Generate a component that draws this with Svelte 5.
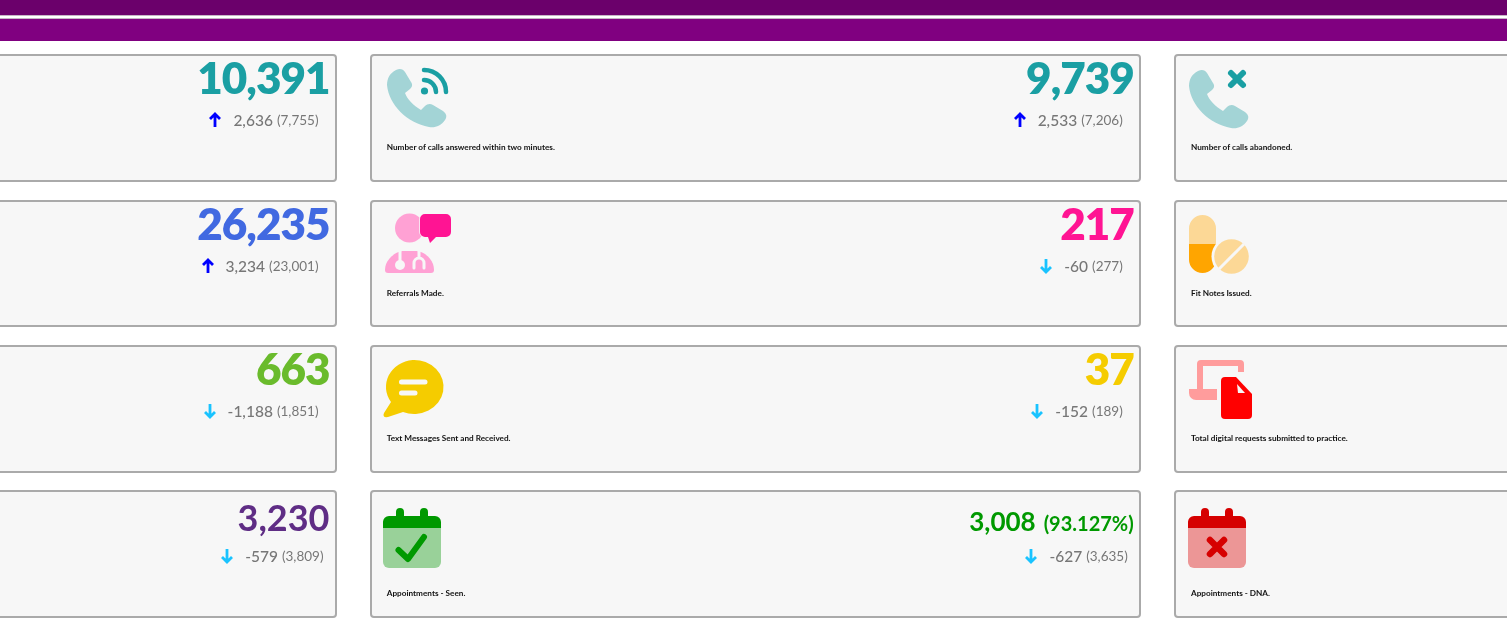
<script>
  const cards = [
    { tone: 'teal', value: '10,391', dir: 'up', delta: '2,636', prev: '(7,755)', caption: '', icon: '' },
    { tone: 'teal', value: '9,739', dir: 'up', delta: '2,533', prev: '(7,206)', caption: 'Number of calls answered within two minutes.', icon: 'phone-wifi' },
    { tone: 'teal', value: '', dir: '', delta: '', prev: '', caption: 'Number of calls abandoned.', icon: 'phone-x' },
    { tone: 'blue', value: '26,235', dir: 'up', delta: '3,234', prev: '(23,001)', caption: '', icon: '' },
    { tone: 'pink', value: '217', dir: 'down', delta: '-60', prev: '(277)', caption: 'Referrals Made.', icon: 'doctor' },
    { tone: 'orange', value: '', dir: '', delta: '', prev: '', caption: 'Fit Notes Issued.', icon: 'pills' },
    { tone: 'lime', value: '663', dir: 'down', delta: '-1,188', prev: '(1,851)', caption: '', icon: '' },
    { tone: 'yellow', value: '37', dir: 'down', delta: '-152', prev: '(189)', caption: 'Text Messages Sent and Received.', icon: 'chat' },
    { tone: 'red', value: '', dir: '', delta: '', prev: '', caption: 'Total digital requests submitted to practice.', icon: 'digital' },
    { tone: 'purple', value: '3,230', dir: 'down', delta: '-579', prev: '(3,809)', caption: '', icon: '', low: true },
    { tone: 'green', value: '3,008', pct: '(93.127%)', dir: 'down', delta: '-627', prev: '(3,635)', caption: 'Appointments - Seen.', icon: 'cal-check', low: true },
    { tone: 'crimson', value: '', dir: '', delta: '', prev: '', caption: 'Appointments - DNA.', icon: 'cal-x', low: true }
  ];
  const phone = 'M9 2C13 0 16 1 18 4L24 14C26 17 25 19 23 21L18 25C20 31 27 38 34 42L38 38C40 36 43 35 46 37L56 43C60 46 60 49 58 52C54 58 48 60 42 59C20 55 2 37 0 17C0 10 3 5 9 2Z';
  const bubble = 'M43 2H64A5 5 0 0 1 69 7V20A5 5 0 0 1 64 25H54L48 31L46 25H43A5 5 0 0 1 38 20V7A5 5 0 0 1 43 2Z';
</script>

<div class="page">
  <div class="band-dark"></div>
  <div class="band-main"></div>
  <div class="grid">
    {#each cards as c}
      <section class="card {c.tone}" class:low={c.low}>
        <div class="left">
          <div class="icon">
            {#if c.icon === 'phone-wifi'}
              <svg viewBox="0 0 70 70" width="70" height="70">
                <path class="soft" transform="translate(5 2)" d={phone} />
                <circle class="solid" cx="42.5" cy="25" r="3.6" />
                <path class="line" d="M42 14a12 12 0 0 1 12 12M42 4a22 22 0 0 1 22 22" />
              </svg>
            {:else if c.icon === 'phone-x'}
              <svg viewBox="0 0 70 70" width="70" height="70">
                <path class="soft" transform="translate(3 3)" d={phone} />
                <path class="line thick" d="M45 7L57 19M57 7L45 19" />
              </svg>
            {:else if c.icon === 'doctor'}
              <svg viewBox="0 0 70 70" width="70" height="70">
                <circle class="soft" cx="27.500" cy="16" r="14.500" />
                <path class="solid halo-stroke" d={bubble} />
                <path class="soft" d="M3 58C3 47 14 39 22 39H33C42 39 52 47 52 58Q52 61 49 61H6Q3 61 3 58Z" />
                <path class="cut" d="M18 39V48M37 39V46M32 56V51A5 5 0 0 1 42 51V56" />
                <circle class="dot" cx="18" cy="53" r="5" />
              </svg>
            {:else if c.icon === 'pills'}
              <svg viewBox="0 0 70 70" width="70" height="70">
                <path class="soft" d="M3 32V16.500A13.500 13.500 0 0 1 30 16.500V32Z" />
                <path class="solid" d="M3 32H30V47.500A13.500 13.500 0 0 1 3 47.500Z" />
                <circle class="dot" cx="45.500" cy="44.500" r="20" />
                <circle class="soft" cx="45.500" cy="44.500" r="17.300" />
                <path class="cut wide" d="M33 57L58 32" />
              </svg>
            {:else if c.icon === 'chat'}
              <svg viewBox="0 0 70 70" width="70" height="70">
                <path class="solid" d="M30.700 3A29.500 27 0 1 1 21 55L6 60Q0 61 2 56L9 45A29.500 27 0 0 1 30.700 3Z" />
                <path class="cut thick" d="M19.500 25H43M19.500 36H33" />
              </svg>
            {:else if c.icon === 'digital'}
              <svg viewBox="0 0 70 70" width="70" height="70">
                <path class="soft" d="M11 32V7A4 4 0 0 1 15 3H54A4 4 0 0 1 58 7V15H52V9H17V32H31V43H10A7 7 0 0 1 3 36V32Z" />
                <path class="solid" d="M39 20H50L66 37V58A4 4 0 0 1 62 62H39A4 4 0 0 1 35 58V24A4 4 0 0 1 39 20Z" />
                <path class="dot" d="M51 27L59 36H52Z" />
              </svg>
            {:else if c.icon === 'cal-check' || c.icon === 'cal-x'}
              <svg viewBox="0 0 70 70" width="70" height="70">
                <path class="soft" d="M1 26H59V60A6 6 0 0 1 53 66H7A6 6 0 0 1 1 60Z" />
                <path class="solid" d="M1 26V20A6 6 0 0 1 7 14H14V10A4 4 0 0 1 22 10V14H38V10A4 4 0 0 1 46 10V14H53A6 6 0 0 1 59 20V26Z" />
                {#if c.icon === 'cal-check'}
                  <path class="line big" d="M16.500 48L26 57L42 35" />
                {:else}
                  <path class="line big" d="M23 38L37 52M37 38L23 52" />
                {/if}
              </svg>
            {/if}
          </div>
          {#if c.caption}<p class="caption">{c.caption}</p>{/if}
        </div>
        <div class="right">
          {#if c.value}
            <div class="value" class:small={c.pct}>{c.value}{#if c.pct}<span class="pct">{c.pct}</span>{/if}</div>
            <div class="delta">
              <svg class="arrow {c.dir}" viewBox="0 0 14 16" width="14" height="16">
                {#if c.dir === 'up'}
                  <path d="M7 15V2M2 7L7 2L12 7" />
                {:else}
                  <path d="M7 1V14M2 9L7 14L12 9" />
                {/if}
              </svg>
              <span class="num">{c.delta}</span>
              <span class="prev">{c.prev}</span>
            </div>
          {/if}
        </div>
      </section>
    {/each}
  </div>
</div>

<style>
  :global(body) { margin: 0; background: #fff; }
  .page {
    width: 1507px;
    height: 628px;
    overflow: hidden;
    font-family: Lato, "Open Sans", sans-serif;
    filter: blur(0.45px);
  }
  .band-dark { height: 15px; background: #6b006b; border-bottom: 1px solid #c4b4c4; }
  .band-main { height: 22px; margin-top: 2px; border-top: 1px solid #c4b4c4; background: #800080; }
  .grid {
    display: grid;
    grid-template-columns: repeat(3, 771px);
    grid-auto-rows: 127.67px;
    column-gap: 33.25px;
    row-gap: 17.67px;
    margin: 13.4px 0 0 -434.5px;
  }
  .card {
    box-sizing: border-box;
    display: flex;
    justify-content: space-between;
    background: #f7f7f7;
    border: 2px solid #aaaaaa;
    border-radius: 4px;
    --c: #1a9fa3;
    --s: #a3d4d6;
  }
  .blue { --c: #4169e1; }
  .pink { --c: #ff1493; --s: #ffa1d4; }
  .orange { --c: #ffa500; --s: #fcd896; }
  .lime { --c: #6abb2c; }
  .yellow { --c: #f5cc00; }
  .red { --c: #ff0000; --s: #ff9c9c; }
  .purple { --c: #5f2d85; }
  .green { --c: #009900; --s: #99d199; }
  .crimson { --c: #d60000; --s: #ec9696; }

  .left { padding: 10px 0 0 10px; }
  .icon { height: 70px; }
  .icon svg { display: block; overflow: visible; }
  .crimson .icon svg { margin-left: 1px; }
  .soft { fill: var(--s); }
  .solid { fill: var(--c); }
  .halo-stroke { stroke: #f7f7f7; stroke-width: 1.500px; paint-order: stroke; }
  .dot { fill: #f7f7f7; }
  .line { fill: none; stroke: var(--c); stroke-width: 4.500px; stroke-linecap: round; stroke-linejoin: round; }
  .line.thick { stroke-width: 6px; }
  .line.big { stroke-width: 6px; }
  .crimson .line.big { stroke-width: 6.500px; }
  .cut { fill: none; stroke: #f7f7f7; stroke-width: 3px; stroke-linecap: round; }
  .cut.wide { stroke-linecap: butt; }
  .cut.thick { stroke-width: 5px; }
  .caption {
    margin: 6px 0 0 5px;
    font-size: 8.200px;
    line-height: 10px;
    font-weight: 700;
    color: #111;
    white-space: nowrap;
  }
  .low .caption { margin-top: 16px; }

  .right {
    display: flex;
    flex-direction: column;
    align-items: flex-end;
    padding: 0 5px 0 0;
  }
  .value {
    height: 46px;
    margin-top: -2px;
    margin-bottom: 2px;
    font-size: 44px;
    line-height: 46px;
    font-weight: 800;
    letter-spacing: -1px;
    color: var(--c);
    white-space: nowrap;
  }
  .low .value { font-size: 36px; margin-top: 2px; margin-bottom: -2px; font-weight: 700; letter-spacing: 0; }
  .value.small, .low .value.small { font-size: 26px; display: flex; align-items: baseline; gap: 8px; margin-top: 6px; margin-bottom: -6px; }
  .pct { font-size: 20px; }
  .delta {
    display: flex;
    align-items: center;
    height: 24px;
    margin-top: 6px;
    padding-right: 11px;
    color: #777;
  }
  .low .delta { padding-right: 6px; }
  .arrow { margin-right: 11px; fill: none; stroke-width: 2.800px; }
  .arrow.up { stroke: #0000ff; }
  .arrow.down { stroke: #19c3ff; }
  .num { font-size: 15.500px; font-weight: 500; }
  .prev { font-size: 13.500px; margin-left: 4px; }
</style>
